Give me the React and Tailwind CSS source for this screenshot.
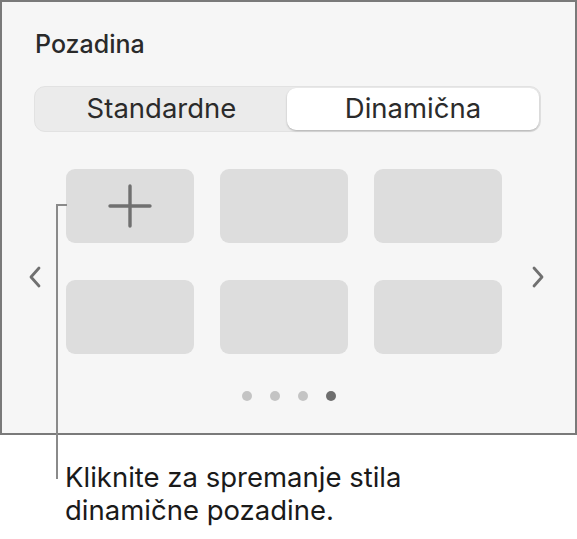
import React from "react";

/* Background picker panel with a callout underneath */

const FONT = { fontFamily: "Inter, 'Noto Sans', sans-serif" };

function Chevron({ dir }) {
  const pts = dir === "left" ? "11,2 3,11 11,20" : "3,2 11,11 3,20";
  return (
    <svg width="14" height="22" viewBox="0 0 14 22">
      <polyline
        points={pts}
        fill="none"
        stroke="#707070"
        strokeWidth="2.8"
        strokeLinecap="round"
        strokeLinejoin="round"
      />
    </svg>
  );
}

function Tile({ children }) {
  return (
    <div className="w-[128px] h-[74px] rounded-[9px] bg-[#dddddd] flex items-center justify-center">
      {children}
    </div>
  );
}

function PlusIcon() {
  return (
    <svg width="44" height="44" viewBox="0 0 44 44">
      <path
        d="M22 2 V42 M2 22 H42"
        stroke="#707070"
        strokeWidth="3.4"
        strokeLinecap="round"
      />
    </svg>
  );
}

export default function App() {
  return (
    <div className="relative w-[577px] h-[539px] bg-white overflow-hidden" style={FONT}>
      {/* ── Panel ── */}
      <div className="h-[435px] bg-[#f6f6f6] border-2 border-[#7a7a7a] flex flex-col">
        <h2 className="mt-[28px] ml-[33px] text-[25px] leading-[29px] font-medium text-[#2a2a2a]">
          Pozadina
        </h2>

        {/* Segmented control */}
        <div className="mt-[27px] ml-[32px] w-[507px] h-[46px] rounded-[11px] bg-[#ebebeb] border border-[#e2e2e2] flex items-center p-[1px]">
          <button className="flex-1 h-full text-[27.5px] text-[#2b2b2b] leading-none">
            Standardne
          </button>
          <button className="w-[252px] h-[42px] rounded-[9px] bg-white shadow-[0_1px_2px_rgba(0,0,0,0.25)] text-[27.5px] text-[#2b2b2b] leading-none">
            Dinamična
          </button>
        </div>

        {/* Tiles with paging arrows */}
        <div className="mt-[37px] flex">
          <div className="w-[64px] flex justify-center pt-[97px] pl-[1px]">
            <Chevron dir="left" />
          </div>
          <div className="grid grid-cols-3 gap-x-[26px] gap-y-[37px]">
            <Tile>
              <PlusIcon />
            </Tile>
            <Tile />
            <Tile />
            <Tile />
            <Tile />
            <Tile />
          </div>
          <div className="flex-1 flex justify-center pt-[97px] pr-[2px]">
            <Chevron dir="right" />
          </div>
        </div>

        {/* Page dots */}
        <div className="mt-[37px] flex justify-center gap-[18px] pl-[1px]">
          <span className="w-[10px] h-[10px] rounded-full bg-[#c4c4c4]" />
          <span className="w-[10px] h-[10px] rounded-full bg-[#c4c4c4]" />
          <span className="w-[10px] h-[10px] rounded-full bg-[#c4c4c4]" />
          <span className="w-[10px] h-[10px] rounded-full bg-[#6e6e6e]" />
        </div>
      </div>

      {/* ── Callout line ── */}
      <div className="absolute left-[56px] top-[204px] w-[11px] h-[2px] bg-[#8a8a8a]" />
      <div className="absolute left-[56px] top-[204px] w-[2px] h-[275px] bg-[#8a8a8a]" />

      {/* Caption */}
      <p className="ml-[65px] mt-[26px] text-[27.5px] leading-[33px] text-[#1a1a1a]">
        Kliknite za spremanje stila
        <br />
        dinamične pozadine.
      </p>
    </div>
  );
}
